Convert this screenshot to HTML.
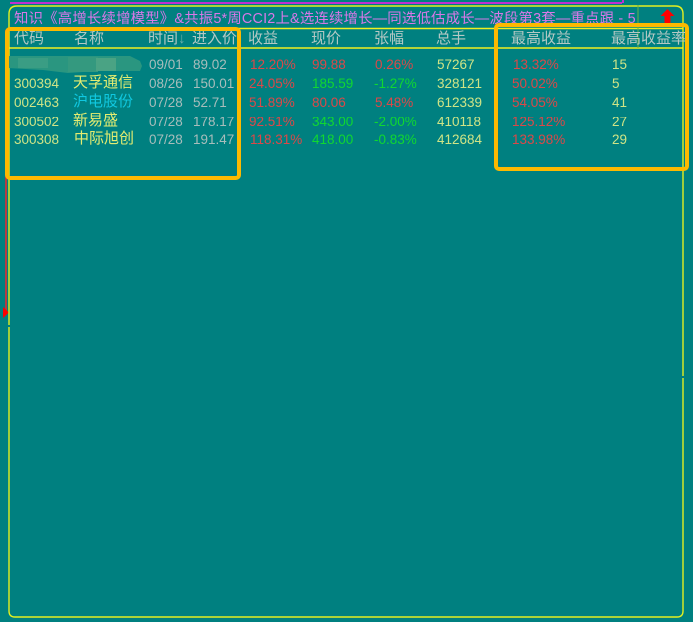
<!DOCTYPE html>
<html lang="zh"><head><meta charset="utf-8"><title>知识</title>
<style>
html,body{margin:0;padding:0;background:#008080;}
#p{position:relative;width:693px;height:622px;overflow:hidden;background:#008080;font-family:"Liberation Sans","Noto Sans CJK SC",sans-serif;}
.a{position:absolute;}
.t{position:absolute;white-space:nowrap;font-size:13.5px;line-height:18px;filter:blur(.3px);}
.h{color:#b4c8c4;font-size:15px;line-height:20px;top:29px;}
.c{color:#cfe486;} .n{color:#e4ec70;font-size:15px;} .g{color:#a8bdbb;} .r{color:#dc4848;} .v{color:#10d830;} .b{color:#10c8e0;font-size:15px;}
.clip{position:absolute;left:0;top:117px;width:693px;height:9px;overflow:hidden;}
</style></head><body><div id="p">
<div class="a" style="left:10px;top:2px;width:612px;height:2px;background:#c030d0;"></div>
<div class="a" style="left:622px;top:0;width:2px;height:3px;background:#c030d0;"></div>
<div class="a" style="left:5px;top:30px;width:2px;height:282px;background:#b83a40;"></div>
<svg class="a" style="left:2px;top:307px" width="8" height="11"><path d="M1 0L7 5.5L1 11Z" fill="#ff0000"/></svg>

<svg class="a" style="left:0;top:0" width="693" height="622">
<path d="M9 14Q9 6 17 6H675Q683 6 683 14V611Q683 617 677 617H15Q9 617 9 611Z" fill="none" stroke="#e4f020" stroke-width="1.4"/>
<path d="M8 28.5H683M8 48H683" fill="none" stroke="#f0f020" stroke-width="1.4"/>
<path d="M638 5V48" stroke="#68b048" stroke-width="1"/>
<path d="M9 325V327M683 376V378" stroke="#008080" stroke-width="2"/>
</svg>

<div class="t" style="left:14px;top:9px;color:#d878e8;font-size:14.4px;letter-spacing:.19px;line-height:20px;">知识《高增长续增模型》&amp;共振5*周CCI2上&amp;选连续增长—同选低估成长—波段第3套—重点跟 - 5</div>
<svg class="a" style="left:659px;top:8px" width="17" height="16"><path d="M8.5 1L15.5 8H11.5V15H5.5V8H1.5Z" fill="#ff0000"/></svg>

<div class="t h" style="left:14px;">代码</div>
<div class="t h" style="left:74px;">名称</div>
<div class="t h" style="left:148px;">时间<span style="opacity:.6">↓</span></div>
<div class="t h" style="left:192px;">进入价</div>
<div class="t h" style="left:248px;">收益</div>
<div class="t h" style="left:311px;">现价</div>
<div class="t h" style="left:374px;">张幅</div>
<div class="t h" style="left:436px;">总手</div>
<div class="t h" style="left:511px;">最高收益</div>
<div class="t h" style="left:611px;">最高收益率</div>

<!-- row 1 -->
<div class="t g" style="left:149px;top:56px;">09/01</div><div class="t g" style="left:193px;top:56px;">89.02</div>
<div class="t r" style="left:250px;top:56px;">12.20%</div><div class="t r" style="left:312px;top:56px;">99.88</div><div class="t r" style="left:375px;top:56px;">0.26%</div><div class="t c" style="left:437px;top:56px;">57267</div><div class="t r" style="left:513px;top:56px;">13.32%</div><div class="t c" style="left:612px;top:56px;">15</div>
<!-- row 2 -->
<div class="t c" style="left:14px;top:75px;">300394</div><div class="t n" style="left:73px;top:74px;">天孚通信</div><div class="t g" style="left:149px;top:75px;">08/26</div><div class="t g" style="left:193px;top:75px;">150.01</div>
<div class="t r" style="left:249px;top:75px;">24.05%</div><div class="t v" style="left:312px;top:75px;">185.59</div><div class="t v" style="left:374px;top:75px;">-1.27%</div><div class="t c" style="left:437px;top:75px;">328121</div><div class="t r" style="left:512px;top:75px;">50.02%</div><div class="t c" style="left:612px;top:75px;">5</div>
<!-- row 3 -->
<div class="t c" style="left:14px;top:94px;">002463</div><div class="t b" style="left:73px;top:93px;">沪电股份</div><div class="t g" style="left:149px;top:94px;">07/28</div><div class="t g" style="left:193px;top:94px;">52.71</div>
<div class="t r" style="left:249px;top:94px;">51.89%</div><div class="t r" style="left:312px;top:94px;">80.06</div><div class="t r" style="left:375px;top:94px;">5.48%</div><div class="t c" style="left:437px;top:94px;">612339</div><div class="t r" style="left:512px;top:94px;">54.05%</div><div class="t c" style="left:612px;top:94px;">41</div>
<!-- row 4 clipped -->
<div class="t n" style="left:73px;top:112px;">新易盛</div>
<div class="clip">
<div class="t c" style="left:14px;top:-4px;">300502</div><div class="t g" style="left:149px;top:-4px;">07/28</div><div class="t g" style="left:193px;top:-4px;">178.17</div>
<div class="t r" style="left:249px;top:-4px;">92.51%</div><div class="t v" style="left:312px;top:-4px;">343.00</div><div class="t v" style="left:374px;top:-4px;">-2.00%</div><div class="t c" style="left:437px;top:-4px;">410118</div><div class="t r" style="left:512px;top:-4px;">125.12%</div><div class="t c" style="left:612px;top:-4px;">27</div>
</div>
<!-- row 5 -->
<div class="t c" style="left:14px;top:131px;">300308</div><div class="t n" style="left:74px;top:130px;">中际旭创</div><div class="t g" style="left:149px;top:131px;">07/28</div><div class="t g" style="left:193px;top:131px;">191.47</div>
<div class="t r" style="left:250px;top:131px;">118.31%</div><div class="t v" style="left:312px;top:131px;">418.00</div><div class="t v" style="left:374px;top:131px;">-0.83%</div><div class="t c" style="left:437px;top:131px;">412684</div><div class="t r" style="left:512px;top:131px;">133.98%</div><div class="t c" style="left:612px;top:131px;">29</div>

<!-- mosaic patch -->
<svg class="a" style="left:8px;top:55px" width="134" height="19">
<path d="M0 1H122L132 6L134 11L132 16H90L60 18L35 15L0 13Z" fill="#2a9680"/>
<rect x="60" y="2" width="30" height="15" fill="#34997f"/>
<rect x="88" y="3" width="20" height="13" fill="#4aa384"/>
<rect x="10" y="3" width="30" height="10" fill="#3a9d84"/>
</svg>

<!-- orange boxes -->
<div class="a" style="left:5px;top:27px;width:228px;height:145px;border:4px solid #fdb900;border-radius:5px;"></div>
<div class="a" style="left:494px;top:23px;width:187px;height:140px;border:4px solid #fdb900;border-radius:5px;"></div>
</div></body></html>
